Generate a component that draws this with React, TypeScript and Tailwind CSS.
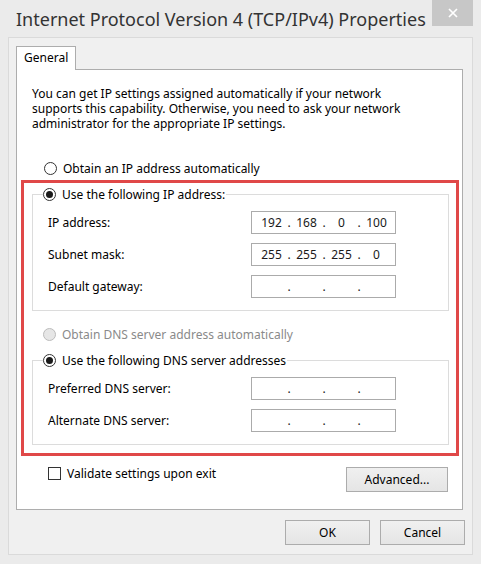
import React from "react";

const Radio = ({ checked, disabled }: { checked?: boolean; disabled?: boolean }) => (
  <span
    className={
      disabled
        ? "w-[13px] h-[13px] rounded-full border border-[#bcbcbc] bg-[#e6e6e6] flex items-center justify-center shrink-0"
        : "w-[13px] h-[13px] rounded-full border border-[#333333] bg-white flex items-center justify-center shrink-0"
    }
  >
    {checked && <span className="w-[7px] h-[7px] rounded-full bg-[#1a1a1a]" />}
  </span>
);

const IPField = ({ parts }: { parts: string[] }) => (
  <div className="w-[145px] h-[23px] border border-[#ababab] bg-white flex items-center pl-[5px] text-[12px] text-[#1a1a1a] leading-[15px]">
    <span className="w-[29px] text-center">{parts[0]}</span>
    <span className="w-[6px] text-center">.</span>
    <span className="w-[29px] text-center">{parts[1]}</span>
    <span className="w-[6px] text-center">.</span>
    <span className="w-[29px] text-center">{parts[2]}</span>
    <span className="w-[6px] text-center">.</span>
    <span className="w-[29px] text-center">{parts[3]}</span>
  </div>
);

const Row = ({ label, parts }: { label: string; parts: string[] }) => (
  <div className="flex items-center h-[23px]">
    <span className="w-[203px]">{label}</span>
    <IPField parts={parts} />
  </div>
);

const Btn = ({ children, w }: { children: React.ReactNode; w: string }) => (
  <div
    className={`${w} h-[25px] border border-[#acacac] bg-gradient-to-b from-[#f0f0f0] to-[#e5e5e5] flex items-center justify-center text-[12px] text-black`}
  >
    {children}
  </div>
);

export default function App() {
  return (
    <div className="w-[481px] h-[564px] bg-[#ebebeb] flex flex-col font-['Noto_Sans',sans-serif] text-black overflow-hidden">
      {/* title bar */}
      <div className="h-[37px] flex items-start justify-between pr-[8px] shrink-0">
        <div className="pl-[16px] pt-[7px] text-[18px] leading-[24px] text-[#333333] whitespace-nowrap">
          Internet Protocol Version 4 (TCP/IPv4) Properties
        </div>
        <div className="w-[41px] h-[26px] bg-[#c7c7c7] flex items-center justify-center">
          <svg width="10" height="10" viewBox="0 0 10 10">
            <path d="M1 1 L9 9 M9 1 L1 9" stroke="white" strokeWidth="1.7" />
          </svg>
        </div>
      </div>

      {/* client area */}
      <div className="mx-[8px] h-[518px] border border-[#dadada] bg-[#f0f0f0] flex flex-col px-[7px] pt-[8px] shrink-0">
        <div className="flex">
          <div className="w-[60px] h-[24px] -mb-px border border-b-0 border-[#adadad] bg-white relative z-10 text-[12px] leading-[15px] pl-[7px] pt-[3px]">
            General
          </div>
        </div>
        <div className="w-[447px] h-[441px] border border-[#adadad] bg-white flex flex-col text-[12px] leading-[15px]">
          <div className="pl-[15px] pt-[16px] whitespace-nowrap flex flex-col">
            <span className="h-[15px]">You can get IP settings assigned automatically if your network</span>
            <span className="h-[15px]">supports this capability. Otherwise, you need to ask your network</span>
            <span className="h-[15px]">administrator for the appropriate IP settings.</span>
          </div>

          <div className="flex items-center mt-[30px] ml-[27px] gap-[6px] h-[15px]">
            <Radio />
            <span>Obtain an IP address automatically</span>
          </div>

          {/* red annotation box */}
          <div className="ml-[4px] mt-[4px] w-[438px] border-[3px] border-[#e04848] flex flex-col pb-[8px]">
            <fieldset className="ml-[8px] mt-[4px] w-[417px] border border-[#dcdcdc] p-0">
              <legend className="ml-[10px] flex items-center gap-[6px] h-[15px] pr-[1px]">
                <Radio checked />
                <span>Use the following IP address:</span>
              </legend>
              <div className="pl-[15px] pt-[9px] pb-[12px] flex flex-col gap-[9px]">
                <Row label="IP address:" parts={["192", "168", "0", "100"]} />
                <Row label="Subnet mask:" parts={["255", "255", "255", "0"]} />
                <Row label="Default gateway:" parts={["", "", "", ""]} />
              </div>
            </fieldset>

            <div className="flex items-center mt-[16px] ml-[19px] gap-[6px] h-[15px] text-[#8a8a8a]">
              <Radio disabled />
              <span>Obtain DNS server address automatically</span>
            </div>

            <fieldset className="ml-[8px] mt-[11px] w-[417px] border border-[#dcdcdc] p-0">
              <legend className="ml-[10px] flex items-center gap-[6px] h-[15px] pr-[1px]">
                <Radio checked />
                <span>Use the following DNS server addresses</span>
              </legend>
              <div className="pl-[15px] pt-[9px] pb-[12px] flex flex-col gap-[9px]">
                <Row label="Preferred DNS server:" parts={["", "", "", ""]} />
                <Row label="Alternate DNS server:" parts={["", "", "", ""]} />
              </div>
            </fieldset>
          </div>

          <div className="flex items-start justify-between mt-[10px] pl-[31px] pr-[14px]">
            <div className="flex items-center gap-[6px] h-[14px]">
              <span className="w-[13px] h-[13px] border border-[#333333] bg-white" />
              <span>Validate settings upon exit</span>
            </div>
            <div className="mt-[1px]">
              <Btn w="w-[102px]">Advanced...</Btn>
            </div>
          </div>
        </div>

        <div className="flex justify-end gap-[10px] mt-[10px]">
          <Btn w="w-[85px]">OK</Btn>
          <Btn w="w-[85px]">Cancel</Btn>
        </div>
      </div>
    </div>
  );
}
